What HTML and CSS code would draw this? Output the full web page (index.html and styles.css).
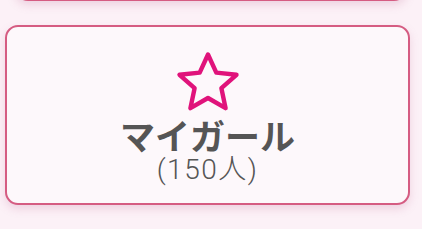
FILE: index.html
```html
<!DOCTYPE html>
<html lang="ja">
<head>
<meta charset="utf-8">
<link rel="stylesheet" href="styles.css">
</head>
<body>
<div class="page">
  <div class="card card-top"></div>
  <div class="card card-main">
    <svg class="star" viewBox="0 0 68 64" width="68" height="64">
      <path d="M34 3.5 L42.3 21.6 L62.5 23.8 L47.4 37.2 L51.6 57.2 L34 47 L16.4 57.2 L20.6 37.2 L5.5 23.8 L25.7 21.6 Z" fill="none" stroke="#e0137b" stroke-width="4.4" stroke-linejoin="round"/>
    </svg>
    <div class="title">マイガール</div>
    <div class="count">(150人)</div>
  </div>
</div>
</body>
</html>
```

FILE: styles.css
```css
html, body {
  margin: 0;
  padding: 0;
  background: #fcf1f7;
}
.page {
  width: 422px;
  height: 229px;
  overflow: hidden;
  position: relative;
  font-family: "Noto Sans CJK JP", "Noto Sans", sans-serif;
}
.card {
  box-sizing: border-box;
  background: #fdf8fb;
  border: 2.5px solid #d55c82;
  border-radius: 13px;
  box-shadow: 0 4px 8px rgba(200, 120, 160, 0.25);
}
.card-top {
  margin: -60px 15px 0 15px;
  height: 61px;
}
.card-main {
  margin: 24px 12px 0 5px;
  height: 180px;
  display: flex;
  flex-direction: column;
  align-items: center;
  padding-top: 24px;
}
.star {
  display: block;
}
.title {
  font-size: 35px;
  font-weight: 700;
  color: #555555;
  line-height: 34px;
  margin-top: 3px;
}
.count {
  font-family: Roboto, "Noto Sans CJK JP", sans-serif;
  font-size: 28px;
  font-weight: 300;
  letter-spacing: 1.5px;
  color: #555555;
  line-height: 32px;
  margin-top: 2px;
}
```
